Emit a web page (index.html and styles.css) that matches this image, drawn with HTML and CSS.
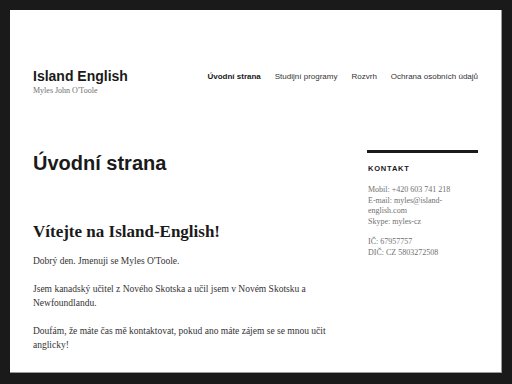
FILE: index.html
```html
<!DOCTYPE html>
<html lang="cs">
<head>
    <meta charset="UTF-8">
    <meta name="viewport" content="width=device-width, initial-scale=1.0">
    <title>Island English</title>
    <link rel="stylesheet" href="styles.css">
</head>
<body>
    <div class="page">
        <!-- hlavička -->
        <header class="site-header">
            <div class="branding">
                <div class="site-title">Island English</div>
                <div class="site-description">Myles John O'Toole</div>
            </div>
            <nav class="menu">
                <a href="#" class="current">Úvodní strana</a>
                <a href="#">Studijní programy</a>
                <a href="#">Rozvrh</a>
                <a href="#">Ochrana osobních údajů</a>
            </nav>
        </header>

        <div class="site-content">
            <main class="content">
                <h1 class="entry-title">Úvodní strana</h1>
                <h2 class="welcome">Vítejte na Island-English!</h2>
                <p>Dobrý den. Jmenuji se Myles O'Toole.</p>
                <p>Jsem kanadský učitel z Nového Skotska a učil jsem v Novém Skotsku a Newfoundlandu.</p>
                <p>Doufám, že máte čas mě kontaktovat, pokud ano máte zájem se se mnou učit anglicky!</p>
            </main>

            <aside class="sidebar">
                <h3 class="widget-title">Kontakt</h3>
                <p>Mobil: +420 603 741 218<br>E-mail: myles@island-english.com<br>Skype: myles-cz</p>
                <p>IČ: 67957757<br>DIČ: CZ 5803272508</p>
            </aside>
        </div>
    </div>
</body>
</html>
```

FILE: styles.css
```css
html, body {
    height: 100%;
}

body {
    margin: 0;
    padding: 10px 10px 11px 10px;
    box-sizing: border-box;
    background-color: #1a1a1a;
    font-family: "Liberation Serif", serif;
    color: #333;
}

.page {
    height: 100%;
    background-color: #fff;
    box-shadow: inset -1px -1px 0 #9a9a9a;
    padding: 0 24px 0 23px;
    overflow: hidden;
}

.site-header {
    display: flex;
    justify-content: space-between;
    align-items: flex-start;
    padding-top: 57px;
}

.site-title {
    font-family: "Liberation Sans", Arial, sans-serif;
    font-weight: bold;
    font-size: 14px;
    line-height: 18px;
    color: #1a1a1a;
}

.site-description {
    font-size: 8px;
    line-height: 12px;
    color: #707070;
}

.menu {
    display: flex;
    gap: 14px;
    padding-top: 3px;
}

.menu a {
    font-family: "Liberation Sans", Arial, sans-serif;
    font-size: 8px;
    line-height: 14px;
    color: #333;
    text-decoration: none;
}

.menu a.current {
    font-weight: bold;
    color: #1a1a1a;
}

.site-content {
    display: flex;
    justify-content: space-between;
    margin-top: 53px;
}

.content {
    width: 310px;
}

.entry-title {
    font-family: "Liberation Sans", Arial, sans-serif;
    font-weight: bold;
    font-size: 20px;
    line-height: 26px;
    color: #1a1a1a;
    margin: 0 0 45px 0;
}

.welcome {
    font-size: 17px;
    line-height: 22px;
    color: #1a1a1a;
    margin: 0 0 11px 0;
}

.content p {
    font-size: 9.5px;
    line-height: 14px;
    margin: 0 0 14px 0;
}

.sidebar {
    width: 111px;
    border-top: 3px solid #1a1a1a;
    padding-top: 11px;
}

.widget-title {
    font-family: "Liberation Sans", Arial, sans-serif;
    font-size: 7.5px;
    letter-spacing: 0.8px;
    text-transform: uppercase;
    color: #1a1a1a;
    margin: 0 0 12px 1px;
}

.sidebar p {
    font-size: 8px;
    line-height: 10.5px;
    color: #707070;
    margin: 0 0 10px 1px;
}
```
